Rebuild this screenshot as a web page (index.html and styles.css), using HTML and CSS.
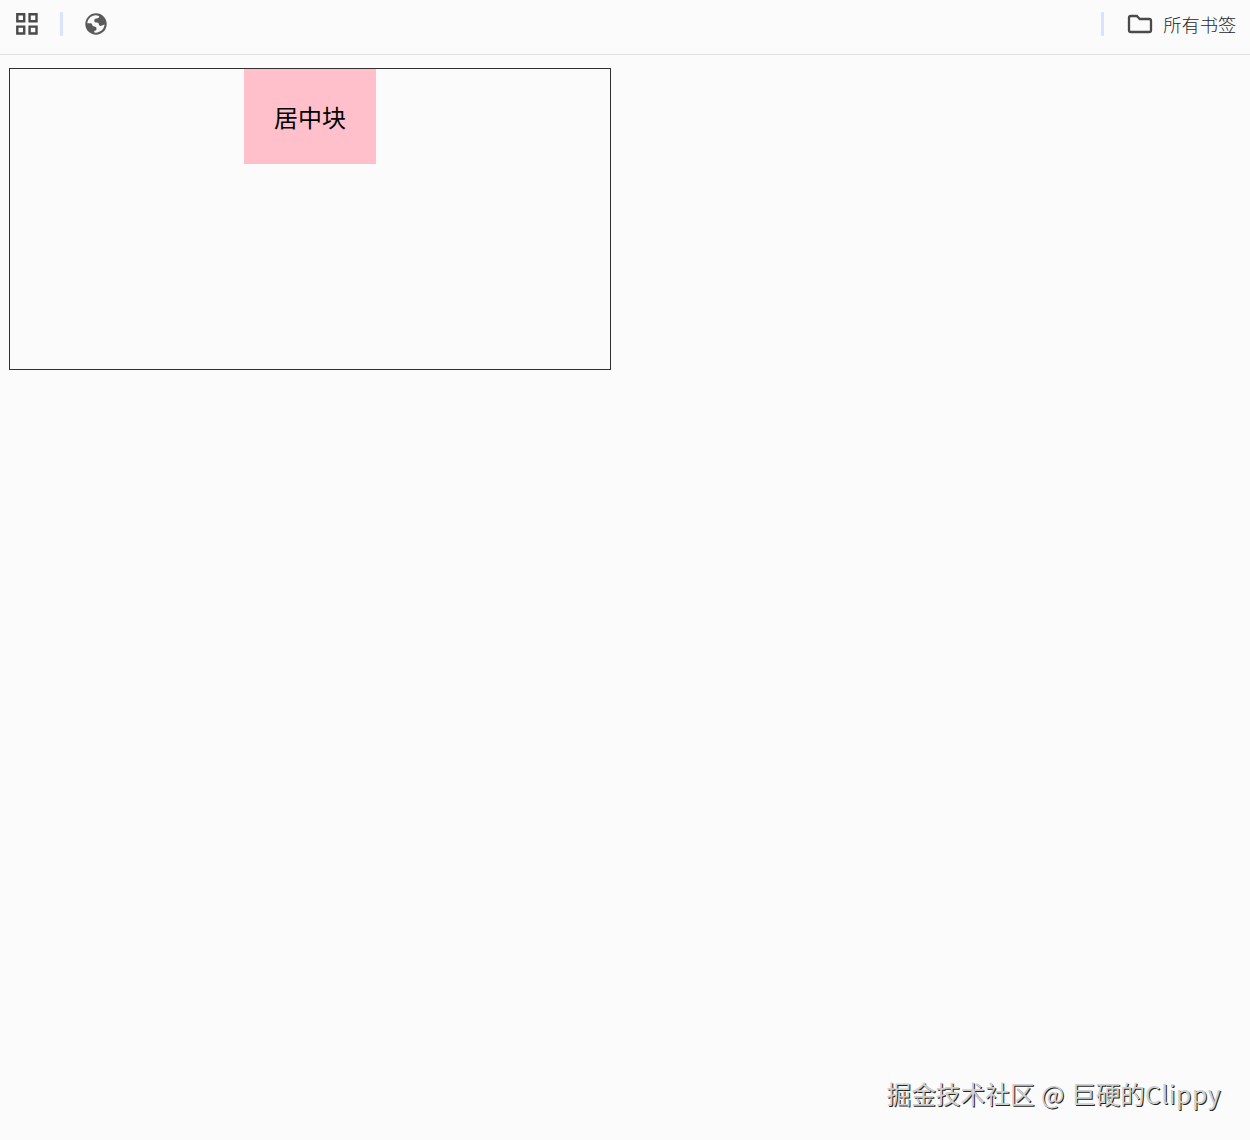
FILE: index.html
```html
<!DOCTYPE html>
<html lang="zh-CN">
<head>
<meta charset="utf-8">
<title>居中块</title>
<link rel="stylesheet" href="styles.css">
</head>
<body>
<header class="bookmarks">
  <svg class="apps" width="22" height="22" viewBox="0 0 22 22"><path d="M1.300 1.300h6.900v6.900h-6.900zM13.600 1.300h6.900v6.900h-6.900zM1.300 13.600h6.900v6.900h-6.900zM13.600 13.600h6.900v6.900h-6.900z"/></svg>
  <span class="divider"></span>
  <svg class="globe" width="22" height="22" viewBox="0 0 22 22"><circle cx="11" cy="11" r="10.700"/><path d="M2.300 10.200C2.600 6 6 2.600 10.800 2.300L14.200 2.900C14.200 4.700 13 5.300 11.300 5.500C9.600 5.800 9.300 6.600 9.300 7.800C9.300 9.300 10.400 9.600 12 9.600C13.300 9.600 13.600 10.400 14 11.700C14.400 12.900 15.500 13.200 17 12.600L19.600 11.600C19.300 16 15.600 19.500 11 19.700L9.200 19.500V17.800C11 17.800 11.500 17 11.500 15.700C11.500 14.300 10.700 13.700 9.300 13.600C7.500 13.400 7.500 12.300 7 11.300C6.700 10.500 6 10.200 5 10.200Z"/></svg>
  <span class="divider divider-right"></span>
  <svg class="folder" width="26" height="20" viewBox="0 0 26 20"><path d="M3.800 2h6l3 3h9.400q1.800 0 1.800 1.800v9.400q0 1.800-1.800 1.800H3.800Q2 18 2 16.200V3.800Q2 2 3.800 2z"/></svg>
  <span class="label">所有书签</span>
</header>
<main class="container"><div class="block">居中块</div></main>
<footer class="watermark">掘金技术社区 @ 巨硬的<span class="latin">Clippy</span></footer>
</body>
</html>
```
FILE: styles.css
```css
* { box-sizing: border-box; }
body {
  margin: 0;
  height: 1140px;
  display: flex;
  flex-direction: column;
  background: #fbfbfb;
  font-family: "Noto Sans CJK SC", sans-serif;
}
.bookmarks {
  height: 55px;
  flex: none;
  display: flex;
  align-items: flex-start;
  padding: 12px 13.6px 0 16px;
  border-bottom: 1px solid #e0e0e0;
}
.apps { margin-top: 1px; fill: none; stroke: #4a4a4a; stroke-width: 2.4; }
.divider { width: 3px; height: 24px; margin-left: 22px; background: #d9e2ff; border-radius: 1px; }
.globe { margin: 1px 0 0 22px; }
.globe circle { fill: #5a5a5a; }
.globe path { fill: #fbfbfb; }
.divider-right { margin-left: auto; }
.folder { margin: 2px 0 0 23px; fill: none; stroke: #4a4a4a; stroke-width: 2.3; }
.label { margin-left: 10px; font-size: 18.3px; line-height: 24px; font-weight: 300; color: #282828; }
.container {
  width: 602px;
  height: 302px;
  margin: 13px 0 0 9px;
  border: 1px solid #303030;
}
.block {
  width: 132px;
  height: 95px;
  margin: 0 auto;
  background: #ffc0cb;
  color: #000;
  font-size: 24px;
  line-height: 95px;
  text-align: center;
}
.watermark {
  margin: auto 29px 29px auto;
  font-size: 24.7px;
  line-height: 36px;
  word-spacing: 1px;
  white-space: nowrap;
  color: #cfcfcf;
  text-shadow: 1px 1px 0 #222;
}
.latin { letter-spacing: 0.5px; }
```
